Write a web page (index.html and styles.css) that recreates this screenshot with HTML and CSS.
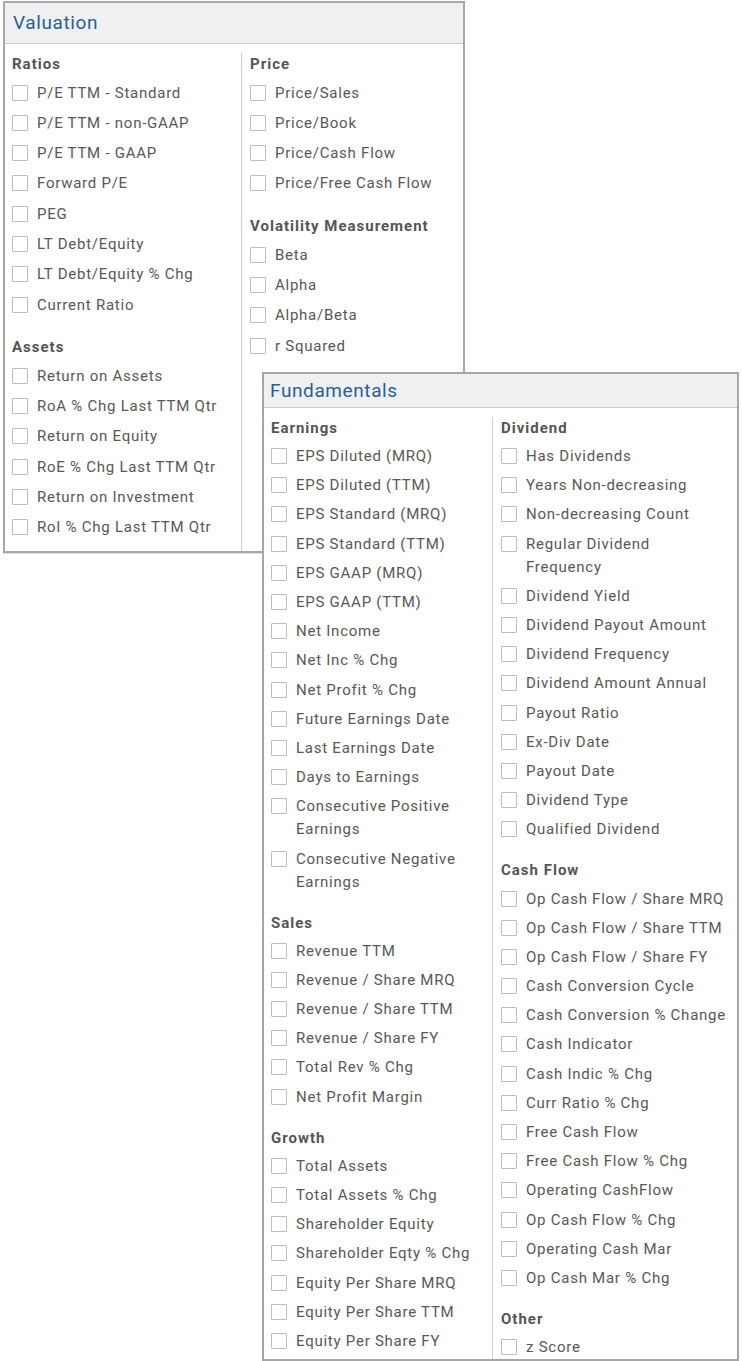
FILE: index.html
```html
<!DOCTYPE html>
<html>
<head>
<meta charset="utf-8">
<link rel="stylesheet" href="styles.css">
</head>
<body>
<div class="desk">
  <section class="panel val">
    <div class="head"><h2 class="title">Valuation</h2></div>
    <div class="body">
      <div class="col col-left">
        <div class="group">
          <h3 class="gh">Ratios</h3>
          <label class="item"><input type="checkbox" class="cb"><span>P/E TTM - Standard</span></label>
          <label class="item"><input type="checkbox" class="cb"><span>P/E TTM - non-GAAP</span></label>
          <label class="item"><input type="checkbox" class="cb"><span>P/E TTM - GAAP</span></label>
          <label class="item"><input type="checkbox" class="cb"><span>Forward P/E</span></label>
          <label class="item"><input type="checkbox" class="cb"><span>PEG</span></label>
          <label class="item"><input type="checkbox" class="cb"><span>LT Debt/Equity</span></label>
          <label class="item"><input type="checkbox" class="cb"><span>LT Debt/Equity % Chg</span></label>
          <label class="item"><input type="checkbox" class="cb"><span>Current Ratio</span></label>
        </div>
        <div class="group">
          <h3 class="gh">Assets</h3>
          <label class="item"><input type="checkbox" class="cb"><span>Return on Assets</span></label>
          <label class="item"><input type="checkbox" class="cb"><span>RoA % Chg Last TTM Qtr</span></label>
          <label class="item"><input type="checkbox" class="cb"><span>Return on Equity</span></label>
          <label class="item"><input type="checkbox" class="cb"><span>RoE % Chg Last TTM Qtr</span></label>
          <label class="item"><input type="checkbox" class="cb"><span>Return on Investment</span></label>
          <label class="item"><input type="checkbox" class="cb"><span>RoI % Chg Last TTM Qtr</span></label>
        </div>
      </div>
      <div class="col col-right">
        <div class="group">
          <h3 class="gh">Price</h3>
          <label class="item"><input type="checkbox" class="cb"><span>Price/Sales</span></label>
          <label class="item"><input type="checkbox" class="cb"><span>Price/Book</span></label>
          <label class="item"><input type="checkbox" class="cb"><span>Price/Cash Flow</span></label>
          <label class="item"><input type="checkbox" class="cb"><span>Price/Free Cash Flow</span></label>
        </div>
        <div class="group">
          <h3 class="gh">Volatility Measurement</h3>
          <label class="item"><input type="checkbox" class="cb"><span>Beta</span></label>
          <label class="item"><input type="checkbox" class="cb"><span>Alpha</span></label>
          <label class="item"><input type="checkbox" class="cb"><span>Alpha/Beta</span></label>
          <label class="item"><input type="checkbox" class="cb"><span>r Squared</span></label>
        </div>
      </div>
    </div>
  </section>

  <section class="panel fund">
    <div class="head"><h2 class="title">Fundamentals</h2></div>
    <div class="body">
      <div class="col col-left">
        <div class="group">
          <h3 class="gh">Earnings</h3>
          <label class="item"><input type="checkbox" class="cb"><span>EPS Diluted (MRQ)</span></label>
          <label class="item"><input type="checkbox" class="cb"><span>EPS Diluted (TTM)</span></label>
          <label class="item"><input type="checkbox" class="cb"><span>EPS Standard (MRQ)</span></label>
          <label class="item"><input type="checkbox" class="cb"><span>EPS Standard (TTM)</span></label>
          <label class="item"><input type="checkbox" class="cb"><span>EPS GAAP (MRQ)</span></label>
          <label class="item"><input type="checkbox" class="cb"><span>EPS GAAP (TTM)</span></label>
          <label class="item"><input type="checkbox" class="cb"><span>Net Income</span></label>
          <label class="item"><input type="checkbox" class="cb"><span>Net Inc % Chg</span></label>
          <label class="item"><input type="checkbox" class="cb"><span>Net Profit % Chg</span></label>
          <label class="item"><input type="checkbox" class="cb"><span>Future Earnings Date</span></label>
          <label class="item"><input type="checkbox" class="cb"><span>Last Earnings Date</span></label>
          <label class="item"><input type="checkbox" class="cb"><span>Days to Earnings</span></label>
          <label class="item"><input type="checkbox" class="cb"><span>Consecutive Positive<br>Earnings</span></label>
          <label class="item"><input type="checkbox" class="cb"><span>Consecutive Negative<br>Earnings</span></label>
        </div>
        <div class="group">
          <h3 class="gh">Sales</h3>
          <label class="item"><input type="checkbox" class="cb"><span>Revenue TTM</span></label>
          <label class="item"><input type="checkbox" class="cb"><span>Revenue / Share MRQ</span></label>
          <label class="item"><input type="checkbox" class="cb"><span>Revenue / Share TTM</span></label>
          <label class="item"><input type="checkbox" class="cb"><span>Revenue / Share FY</span></label>
          <label class="item"><input type="checkbox" class="cb"><span>Total Rev % Chg</span></label>
          <label class="item"><input type="checkbox" class="cb"><span>Net Profit Margin</span></label>
        </div>
        <div class="group">
          <h3 class="gh">Growth</h3>
          <label class="item"><input type="checkbox" class="cb"><span>Total Assets</span></label>
          <label class="item"><input type="checkbox" class="cb"><span>Total Assets % Chg</span></label>
          <label class="item"><input type="checkbox" class="cb"><span>Shareholder Equity</span></label>
          <label class="item"><input type="checkbox" class="cb"><span>Shareholder Eqty % Chg</span></label>
          <label class="item"><input type="checkbox" class="cb"><span>Equity Per Share MRQ</span></label>
          <label class="item"><input type="checkbox" class="cb"><span>Equity Per Share TTM</span></label>
          <label class="item"><input type="checkbox" class="cb"><span>Equity Per Share FY</span></label>
        </div>
      </div>
      <div class="col col-right">
        <div class="group">
          <h3 class="gh">Dividend</h3>
          <label class="item"><input type="checkbox" class="cb"><span>Has Dividends</span></label>
          <label class="item"><input type="checkbox" class="cb"><span>Years Non-decreasing</span></label>
          <label class="item"><input type="checkbox" class="cb"><span>Non-decreasing Count</span></label>
          <label class="item"><input type="checkbox" class="cb"><span>Regular Dividend<br>Frequency</span></label>
          <label class="item"><input type="checkbox" class="cb"><span>Dividend Yield</span></label>
          <label class="item"><input type="checkbox" class="cb"><span>Dividend Payout Amount</span></label>
          <label class="item"><input type="checkbox" class="cb"><span>Dividend Frequency</span></label>
          <label class="item"><input type="checkbox" class="cb"><span>Dividend Amount Annual</span></label>
          <label class="item"><input type="checkbox" class="cb"><span>Payout Ratio</span></label>
          <label class="item"><input type="checkbox" class="cb"><span>Ex-Div Date</span></label>
          <label class="item"><input type="checkbox" class="cb"><span>Payout Date</span></label>
          <label class="item"><input type="checkbox" class="cb"><span>Dividend Type</span></label>
          <label class="item"><input type="checkbox" class="cb"><span>Qualified Dividend</span></label>
        </div>
        <div class="group">
          <h3 class="gh">Cash Flow</h3>
          <label class="item"><input type="checkbox" class="cb"><span>Op Cash Flow / Share MRQ</span></label>
          <label class="item"><input type="checkbox" class="cb"><span>Op Cash Flow / Share TTM</span></label>
          <label class="item"><input type="checkbox" class="cb"><span>Op Cash Flow / Share FY</span></label>
          <label class="item"><input type="checkbox" class="cb"><span>Cash Conversion Cycle</span></label>
          <label class="item"><input type="checkbox" class="cb"><span>Cash Conversion % Change</span></label>
          <label class="item"><input type="checkbox" class="cb"><span>Cash Indicator</span></label>
          <label class="item"><input type="checkbox" class="cb"><span>Cash Indic % Chg</span></label>
          <label class="item"><input type="checkbox" class="cb"><span>Curr Ratio % Chg</span></label>
          <label class="item"><input type="checkbox" class="cb"><span>Free Cash Flow</span></label>
          <label class="item"><input type="checkbox" class="cb"><span>Free Cash Flow % Chg</span></label>
          <label class="item"><input type="checkbox" class="cb"><span>Operating CashFlow</span></label>
          <label class="item"><input type="checkbox" class="cb"><span>Op Cash Flow % Chg</span></label>
          <label class="item"><input type="checkbox" class="cb"><span>Operating Cash Mar</span></label>
          <label class="item"><input type="checkbox" class="cb"><span>Op Cash Mar % Chg</span></label>
        </div>
        <div class="group">
          <h3 class="gh">Other</h3>
          <label class="item"><input type="checkbox" class="cb"><span>z Score</span></label>
        </div>
      </div>
    </div>
  </section>
</div>
</body>
</html>
```

FILE: styles.css
```css
* { box-sizing: border-box; }
html, body { margin: 0; padding: 0; background: #fff; }
body {
  font-family: Roboto, "Liberation Sans", Arial, sans-serif;
  color: #565656;
}
.desk {
  position: relative;
  width: 742px;
  height: 1361px;
  overflow: hidden;
}
.panel {
  display: flex;
  flex-direction: column;
  background: #fff;
  border: 2px solid #a7a7a7;
  overflow: hidden;
}
.head {
  background: #eff0f2;
  border-bottom: 1px solid #cdcdcd;
  display: flex;
  align-items: center;
  padding-left: 8px;
  flex: none;
}
.title {
  margin: 0;
  font-weight: 400;
  font-size: 19px;
  letter-spacing: 0.6px;
  color: #2c5e92;
  line-height: 24px;
}
.body {
  flex: 1;
  display: grid;
  padding-top: 9px;
  min-height: 0;
}
.col { padding-left: 7px; }
.col-right {
  border-left: 1px solid #cfcfcf;
  padding-left: 8px;
}
.group + .group { margin-top: 16px; }
.gh {
  margin: 0 0 3px;
  font-size: 15px;
  font-weight: 700;
  letter-spacing: 1px;
  line-height: 22px;
  color: #555;
}
.item {
  display: flex;
  align-items: flex-start;
  font-size: 15px;
  letter-spacing: 0.75px;
  line-height: 23px;
  color: #585858;
}
.cb {
  appearance: none;
  -webkit-appearance: none;
  margin: 3px 9px 0 0;
  width: 16px;
  height: 16px;
  flex: none;
  border: 1px solid #bdbdbd;
  border-radius: 1px;
  background: #fff;
}

/* Valuation window */
.val {
  margin: 1px 0 0 3px;
  width: 462px;
  height: 552px;
  box-shadow: 0 1px 0 #dcdcdc;
}
.val .head { height: 41px; }
.val .body { grid-template-columns: 236px 1fr; }
.val .item { padding: 3.65px 0; }

/* Fundamentals window, overlapping */
.fund {
  position: absolute;
  left: 262px;
  top: 372px;
  width: 477px;
  height: 989px;
}
.fund .head { height: 34px; padding-left: 6px; }
.fund .body { grid-template-columns: 228px 1fr; }
.fund .item { padding: 3.1px 0; }
.fund .group + .group { margin-top: 15px; }
```
